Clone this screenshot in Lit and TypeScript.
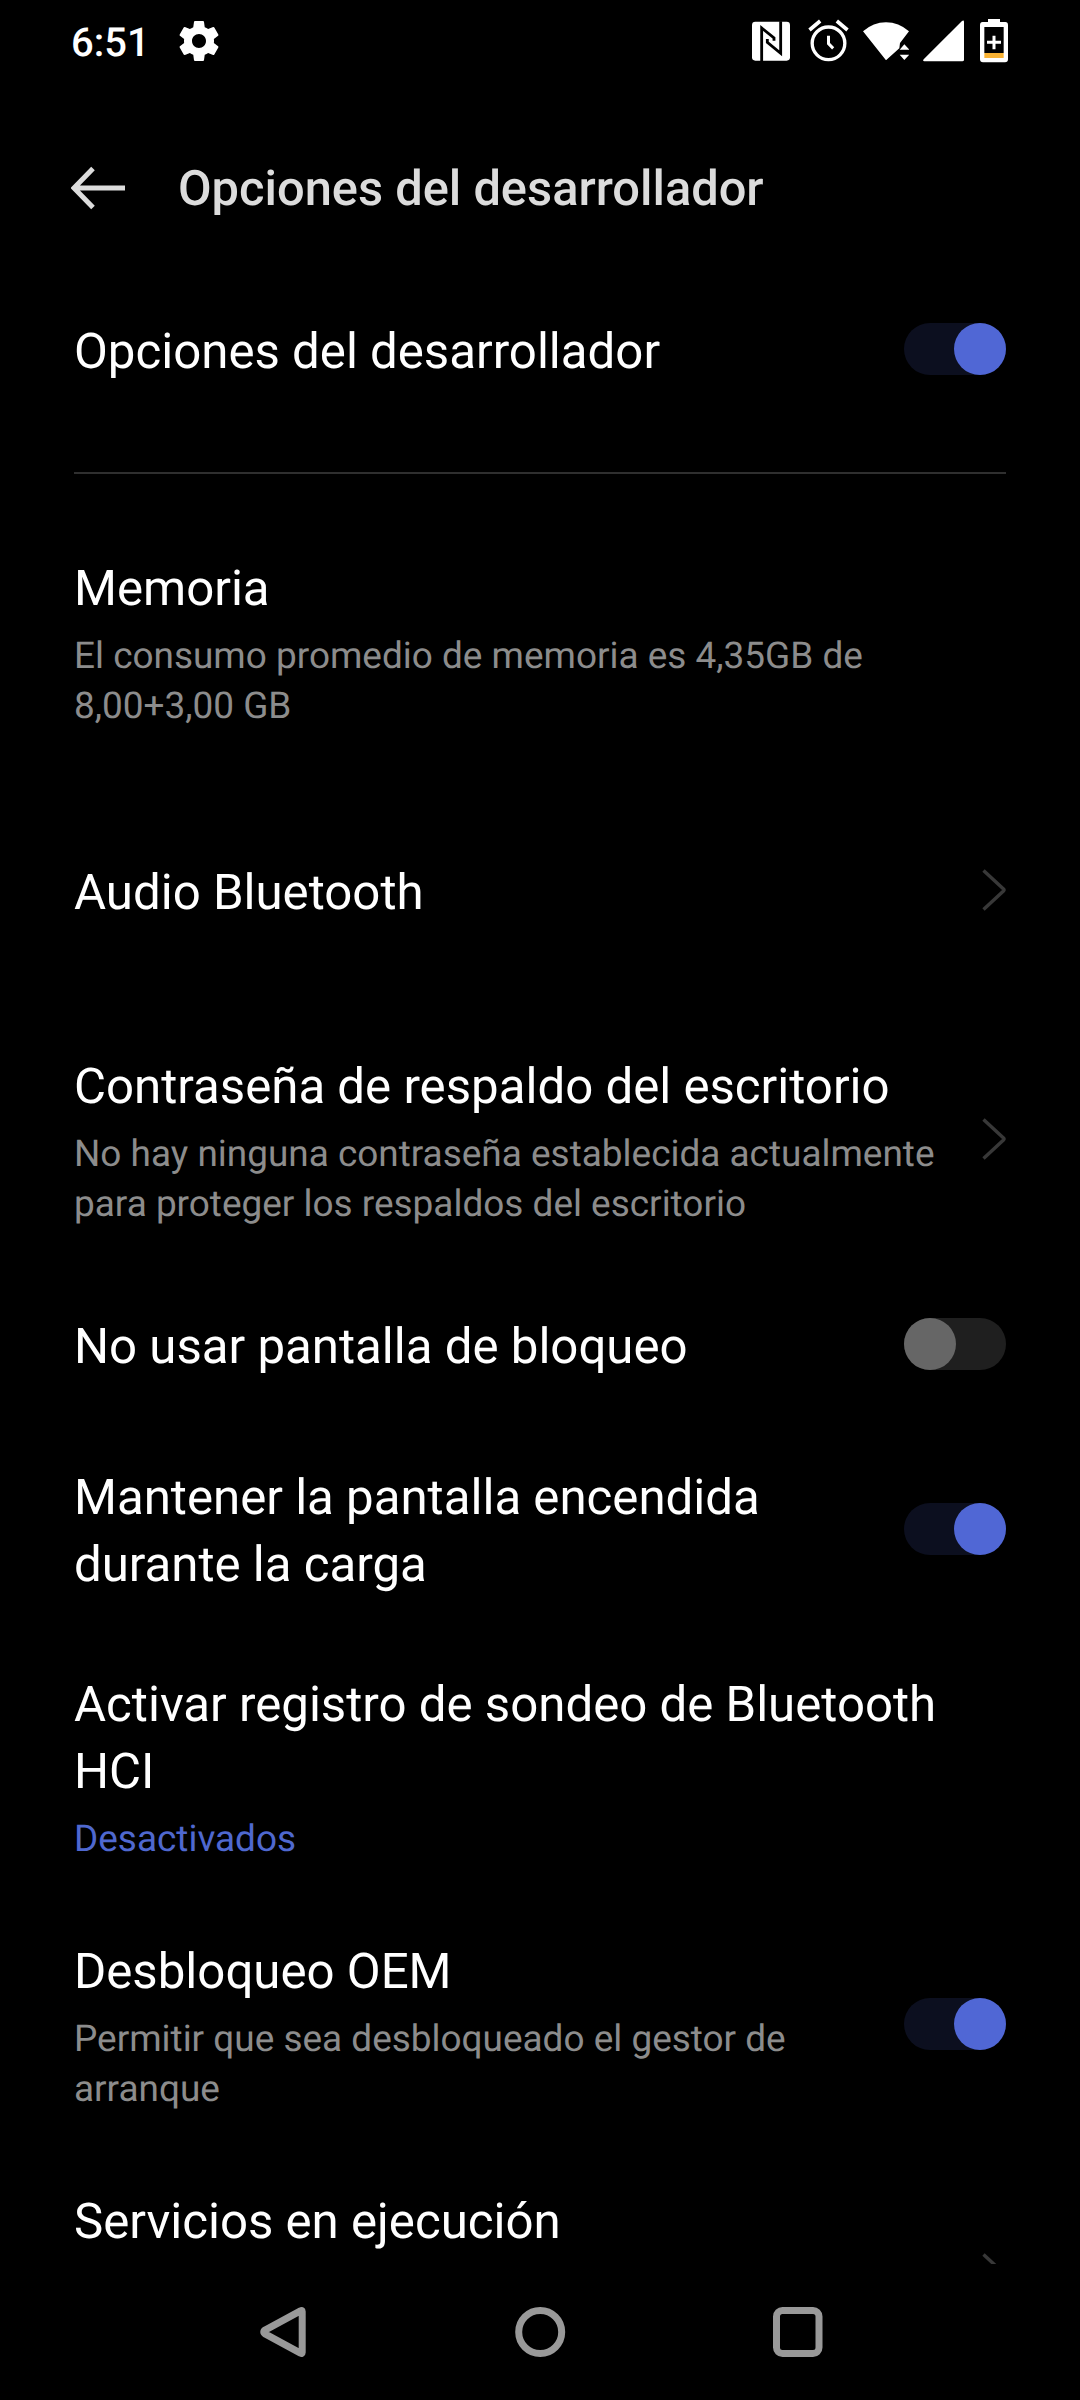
import { LitElement, html, css, nothing } from "lit";
import { customElement, property } from "lit/decorators.js";

type Row = {
  title: string;
  summary?: string;
  accent?: boolean;
  tall?: boolean;
  control?: "on" | "off" | "chevron";
  gap: "none" | "xl" | "lg" | "md" | "sm" | "xs";
};

const MASTER: Row = { title: "Opciones del desarrollador", control: "on", gap: "none" };

const ROWS: Row[] = [
  { title: "Memoria", summary: "El consumo promedio de memoria es 4,35GB de 8,00+3,00 GB", gap: "none" },
  { title: "Audio Bluetooth", control: "chevron", gap: "xl" },
  {
    title: "Contraseña de respaldo del escritorio",
    summary: "No hay ninguna contraseña establecida actualmente para proteger los respaldos del escritorio",
    control: "chevron",
    gap: "lg",
  },
  { title: "No usar pantalla de bloqueo", control: "off", gap: "md" },
  { title: "Mantener la pantalla encendida durante la carga", control: "on", gap: "md" },
  { title: "Activar registro de sondeo de Bluetooth HCI", summary: "Desactivados", accent: true, gap: "xs" },
  { title: "Desbloqueo OEM", summary: "Permitir que sea desbloqueado el gestor de arranque", control: "on", gap: "sm" },
  { title: "Servicios en ejecución", control: "chevron", tall: true, gap: "sm" },
];

@customElement("toggle-switch")
class ToggleSwitch extends LitElement {
  @property({ type: Boolean }) on = false;
  static styles = css`
    :host { display: block; flex: none; }
    .track { display: flex; width: 102px; height: 52px; border-radius: 26px; background: #1f1f1f; }
    .track.on { justify-content: flex-end; background: #0c0f1f; }
    .thumb { width: 52px; height: 52px; border-radius: 50%; background: #666; }
    .on .thumb { background: #5067d5; }
  `;
  render() {
    return html`<div class="track ${this.on ? "on" : ""}"><div class="thumb"></div></div>`;
  }
}

@customElement("setting-row")
class SettingRow extends LitElement {
  @property({ attribute: false }) row!: Row;
  static styles = css`
    :host { display: block; }
    .row { display: flex; align-items: center; justify-content: space-between; }
    .row.tall { height: 181px; }
    .tall .text { align-self: flex-start; }
    .text { padding-top: 6px; margin-bottom: -1px; }
    .text.toggle { max-width: 780px; }
    .text.chevron { max-width: 870px; }
    .title { font-size: 49.2px; line-height: 67px; color: #fff; }
    .summary { margin-top: 9px; font-size: 36.95px; line-height: 50px; color: #8c8c8c; }
    .summary.accent { color: #4f68cf; }
    .arrow { display: block; flex: none; }
  `;
  render() {
    const { title, summary, accent, control, tall } = this.row;
    const kind = control === "chevron" ? "chevron" : control ? "toggle" : "";
    return html`<div class="row ${tall ? "tall" : ""}">
      <div class="text ${kind}">
        <div class="title">${title}</div>
        ${summary ? html`<div class="summary ${accent ? "accent" : ""}">${summary}</div>` : nothing}
      </div>
      ${control === "chevron"
        ? html`<svg class="arrow" width="24" height="42" viewBox="0 0 24 42" fill="none" stroke="#383838" stroke-width="3.4" stroke-linejoin="round"><path d="M1.5 1.5L21.5 20Q22.5 21 21.5 22L1.5 40.5" /></svg>`
        : control
          ? html`<toggle-switch ?on=${control === "on"}></toggle-switch>`
          : nothing}
    </div>`;
  }
}

@customElement("status-bar")
class StatusBar extends LitElement {
  static styles = css`
    :host { display: block; }
    .bar { display: flex; align-items: center; justify-content: space-between; height: 81px; padding: 0 72px 1px 71px; }
    .left, .right { display: flex; align-items: center; }
    .time { padding-top: 4px; font-size: 40px; line-height: 46px; font-weight: 500; color: #fff; }
    .gear { margin-left: 25px; }
    svg { display: block; }
    .alarm { margin-left: 18px; }
    .wifi { margin-left: 14px; }
    .signal { margin-left: 14px; }
    .battery { margin-left: 16px; }
  `;
  render() {
    return html`<div class="bar">
      <div class="left">
        <span class="time">6:51</span>
        <svg class="gear" width="48" height="48" viewBox="0 0 24 24" fill="#fff"><path d="M19.43 12.98c.04-.32.07-.64.07-.98s-.03-.66-.07-.98l2.11-1.65c.19-.15.24-.42.12-.64l-2-3.46c-.12-.22-.39-.3-.61-.22l-2.49 1c-.52-.4-1.08-.73-1.69-.98l-.38-2.65C14.46 2.18 14.25 2 14 2h-4c-.25 0-.46.18-.49.42l-.38 2.65c-.61.25-1.17.59-1.69.98l-2.49-1c-.23-.09-.49 0-.61.22l-2 3.46c-.13.22-.07.49.12.64l2.11 1.65c-.04.32-.07.65-.07.98s.03.66.07.98l-2.11 1.65c-.19.15-.24.42-.12.64l2 3.46c.12.22.39.3.61.22l2.49-1c.52.4 1.08.73 1.69.98l.38 2.65c.03.24.24.42.49.42h4c.25 0 .46-.18.49-.42l.38-2.65c.61-.25 1.17-.59 1.69-.98l2.49 1c.23.09.49 0 .61-.22l2-3.46c.12-.22.07-.49-.12-.64l-2.11-1.65zM12 15.5c-1.93 0-3.5-1.57-3.5-3.5s1.57-3.5 3.5-3.5 3.5 1.57 3.5 3.5-1.57 3.5-3.5 3.5z" /></svg>
      </div>
      <div class="right">
        <svg width="38" height="44" viewBox="66 55 114 132"><rect x="66" y="63" width="114" height="117" rx="10" fill="#fff" /><path d="M95 181V82L132 112V120M152 62V158L112 125V115" fill="none" stroke="#000" stroke-width="8.500" /></svg>
        <svg class="alarm" width="41" height="44" viewBox="236 55 122 132" fill="none" stroke="#fff"><circle cx="297" cy="128" r="49" stroke-width="10" /><path d="M297 105V129L311 143" stroke-width="9" /><path d="M240 88L272 61M322 61L354 88" stroke-width="11" /></svg>
        <svg class="wifi" width="46" height="44" viewBox="399 55 138 132" fill="#fff"><path d="M399 92Q430 65 468 65T537 92L510 127L508 143L468 179Z" /><path d="M509 147L523 131L538 147ZM509 162H538L523 178Z" /></svg>
        <svg class="signal" width="41" height="44" viewBox="579 55 123 132" fill="#fff"><path d="M696 61Q702 57 702 64V177Q702 182 697 182H583Q577 182 581 176Z" /></svg>
        <svg class="battery" width="28" height="44" viewBox="750 55 84 132"><path d="M774 55H810V64H826Q834 64 834 73V176Q834 185 825 185H759Q750 185 750 176V73Q750 64 758 64H774Z" fill="#fff" /><path d="M763 79H821V157H763Z" fill="#000" /><path d="M763 157H821V172H763Z" fill="#f9b233" /><path d="M792 105V146M771 125H813" stroke="#fff" stroke-width="9" /></svg>
      </div>
    </div>`;
  }
}

@customElement("app-root")
class AppRoot extends LitElement {
  static styles = css`
    :host { display: block; font-family: Roboto, sans-serif; background: #000; text-rendering: geometricPrecision; }
    .screen { display: flex; flex-direction: column; height: 2400px; overflow: hidden; background: #000; }
    .header { display: flex; align-items: center; gap: 51px; height: 212px; padding: 0 71px; }
    .header svg { display: block; }
    .heading { margin: 0; padding-top: 2px; font-size: 48.8px; line-height: 60px; font-weight: 500; color: #dcdcdc; }
    .content { flex: 1; min-height: 0; overflow: hidden; padding: 19px 74px 0; }
    .divider { height: 2px; margin: 87px 0 76px; background: #2f2f2f; }
    .xl { margin-top: 123px; }
    .lg { margin-top: 122px; }
    .md { margin-top: 79px; }
    .sm { margin-top: 69px; }
    .xs { margin-top: 68px; }
    .nav { flex: none; height: 136px; }
    .nav svg { display: block; }
  `;
  render() {
    return html`<div class="screen">
      <status-bar></status-bar>
      <div class="header">
        <svg width="56" height="44" viewBox="0 0 56 44" fill="none" stroke="#dcdcdc" stroke-width="5"><path d="M54 22H4M22 2.500L3 22L22 41.500" /></svg>
        <h1 class="heading">Opciones del desarrollador</h1>
      </div>
      <div class="content">
        <setting-row .row=${MASTER}></setting-row>
        <div class="divider"></div>
        ${ROWS.map((row) => html`<setting-row class=${row.gap} .row=${row}></setting-row>`)}
      </div>
      <div class="nav">
        <svg width="1080" height="136" viewBox="0 2264 1080 136" fill="none" stroke="#999" stroke-width="7" stroke-linejoin="round">
          <path d="M302.2 2311.500Q302.200 2310 300.500 2310.800L265.500 2329.800Q262 2332 265.500 2334.200L300.500 2353.200Q302.200 2354 302.200 2352.500Z" /><circle cx="540.2" cy="2332" r="21.500" /><rect x="776.500" y="2310.500" width="42.500" height="43" rx="6" />
        </svg>
      </div>
    </div>`;
  }
}
